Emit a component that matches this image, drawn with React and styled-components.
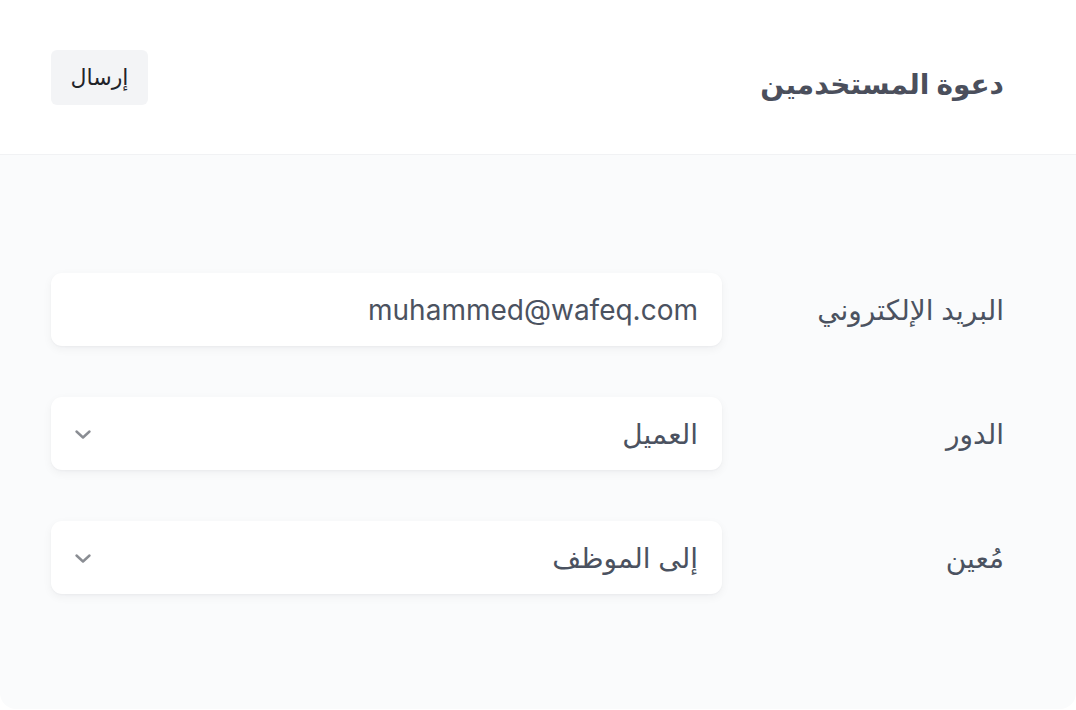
import React from "react";
import styled, { createGlobalStyle } from "styled-components";

const GlobalStyle = createGlobalStyle`
  html, body {
    margin: 0;
    padding: 0;
    background: #ffffff;
  }
  body {
    font-family: Inter, "Noto Sans", "DejaVu Sans", sans-serif;
  }
`;

const Panel = styled.div`
  width: 1076px;
  height: 709px;
  display: flex;
  flex-direction: column;
  background: #ffffff;
`;

const Header = styled.header`
  height: 155px;
  box-sizing: border-box;
  display: flex;
  align-items: center;
  justify-content: space-between;
  padding: 0 72px 0 51px;
  border-bottom: 1px solid #f1f2f4;
  background: #ffffff;
`;

const Title = styled.h1`
  margin: 14px 0 0;
  font-size: 28px;
  font-weight: 600;
  color: #4b4f5c;
`;

const SendButton = styled.button`
  width: 97px;
  height: 55px;
  border: none;
  border-radius: 6px;
  background: #f3f4f6;
  color: #1f2329;
  font-family: inherit;
  font-size: 22px;
  cursor: pointer;
`;

const Body = styled.div`
  flex: 1;
  background: #fafbfc;
  border-radius: 0 0 16px 16px;
  padding: 118px 72px 0 51px;
  display: flex;
  flex-direction: column;
  gap: 51px;
`;

const Row = styled.div`
  display: grid;
  grid-template-columns: 282px 671px;
  align-items: center;
`;

const Label = styled.label`
  font-size: 28px;
  color: #4b5260;
`;

const Field = styled.div`
  height: 73px;
  box-sizing: border-box;
  display: flex;
  align-items: center;
  justify-content: space-between;
  padding: 0 24px 0 22px;
  background: #ffffff;
  border-radius: 11px;
  box-shadow: 0 3px 10px rgba(17, 24, 39, 0.05), 0 1px 2px rgba(17, 24, 39, 0.03);
  font-size: 28px;
  color: #4b5260;
`;

const Value = styled.span`
  direction: ${(p) => (p.$ltr ? "ltr" : "rtl")};
`;

const Chevron = () => (
  <svg width="20" height="20" viewBox="0 0 20 20" fill="none">
    <path d="M3.5 7.5l6.5 6 6.5-6" stroke="#8a8d93" strokeWidth="2.4" strokeLinecap="round" strokeLinejoin="round" />
  </svg>
);

const fields = [
  { label: "البريد الإلكتروني", value: "muhammed@wafeq.com", ltr: true },
  { label: "الدور", value: "العميل", select: true },
  { label: "مُعين", value: "إلى الموظف", select: true },
];

export default function App() {
  return (
    <>
      <GlobalStyle />
      <Panel dir="rtl">
        <Header>
          <Title>دعوة المستخدمين</Title>
          <SendButton type="button">إرسال</SendButton>
        </Header>
        <Body>
          {fields.map((f) => (
            <Row key={f.label}>
              <Label>{f.label}</Label>
              <Field>
                <Value $ltr={f.ltr}>{f.value}</Value>
                {f.select && <Chevron />}
              </Field>
            </Row>
          ))}
        </Body>
      </Panel>
    </>
  );
}
